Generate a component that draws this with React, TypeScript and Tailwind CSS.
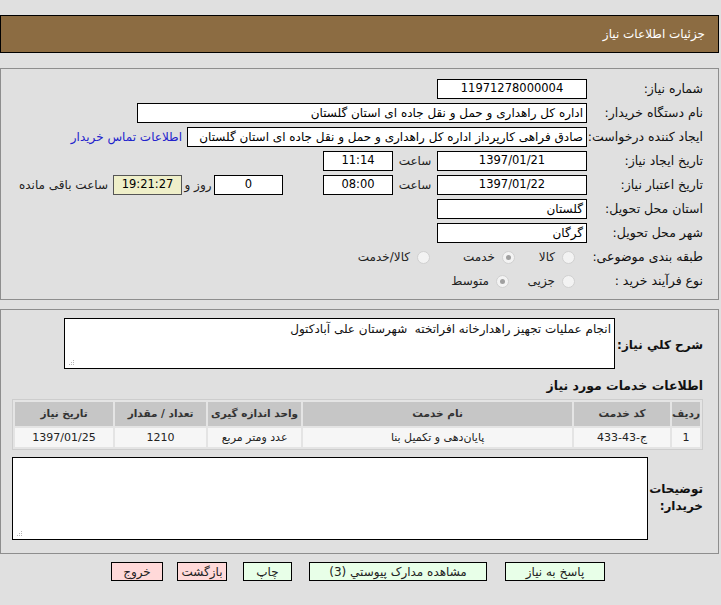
const font = { fontFamily: '"DejaVu Sans", Tahoma, sans-serif' };

function Field({
  w,
  children,
  center,
  bg = "bg-white",
  border = "border-black",
  num,
}: {
  w: string;
  children?: React.ReactNode;
  center?: boolean;
  bg?: string;
  border?: string;
  num?: boolean;
}) {
  return (
    <div
      className={`flex h-5 shrink-0 items-center overflow-hidden whitespace-nowrap border px-[3px] text-black ${bg} ${border} ${w} ${
        num ? "text-[11.5px]" : "text-[12px]"
      } ${center ? "justify-center" : "justify-start"}`}
    >
      {children}
    </div>
  );
}

function Label({ children, wide }: { children: React.ReactNode; wide?: boolean }) {
  return (
    <div
      className={`shrink-0 whitespace-nowrap text-[12.5px] text-[#111] ${
        wide ? "-ml-[4px] w-[120px]" : "w-[116px]"
      }`}
    >
      {children}
    </div>
  );
}

function Radio({ checked }: { checked?: boolean }) {
  return (
    <span className="flex h-[13px] w-[13px] shrink-0 items-center justify-center rounded-full border border-[#d0d0d0] bg-[#f3f3f3]">
      {checked && <span className="h-[5px] w-[5px] rounded-full bg-[#a0a0a0]" />}
    </span>
  );
}

function Option({ label, checked, w }: { label: string; checked?: boolean; w: string }) {
  return (
    <div className={`flex items-center gap-[7px] ${w}`}>
      <Radio checked={checked} />
      <span className="text-[12px] text-[#222]">{label}</span>
    </div>
  );
}

function Grip() {
  return (
    <svg className="absolute bottom-[2px] left-[3px]" width="7" height="7" viewBox="0 0 7 7">
      <rect x="5" y="1" width="1" height="1" fill="#b5b5b5" />
      <rect x="3" y="3" width="1" height="1" fill="#b5b5b5" />
      <rect x="5" y="3" width="1" height="1" fill="#b5b5b5" />
      <rect x="1" y="5" width="1" height="1" fill="#b5b5b5" />
      <rect x="3" y="5" width="1" height="1" fill="#b5b5b5" />
      <rect x="5" y="5" width="1" height="1" fill="#b5b5b5" />
    </svg>
  );
}

function Btn({ children, red, w }: { children: React.ReactNode; red?: boolean; w: string }) {
  return (
    <div
      className={`flex h-[19px] items-center justify-center border border-black text-[12px] text-[#222] ${w} ${
        red ? "bg-[#ffd9d9]" : "bg-[#e8ffe8]"
      }`}
    >
      {children}
    </div>
  );
}

export default function App() {
  const th = "bg-[#c6c6c6] h-[24px] text-[10.5px] font-bold text-[#333] text-center whitespace-nowrap";
  const td = "bg-[#f6f6f6] h-[19px] text-[11px] leading-[19px] text-[#222] text-center whitespace-nowrap";
  return (
    <div style={font} className="min-h-screen w-full bg-[#e0e0e0] pt-[15px]">
      <div dir="rtl" className="w-[719px]">
        <div className="flex h-[38px] w-[719px] items-center border border-black bg-[#8c6c42] pr-[13px] text-[12px] text-white">
          جزئیات اطلاعات نیاز
        </div>

        <div className="mt-[15px] flex h-[232px] w-[719px] flex-col gap-1 border border-[#8e8e8e] pr-[15px] pt-[10px]">
          <div className="flex items-center">
            <Label>شماره نیاز:</Label>
            <Field w="w-[150px]" center num>11971278000004</Field>
          </div>
          <div className="flex items-center">
            <Label>نام دستگاه خریدار:</Label>
            <Field w="w-[450px]">اداره کل راهداری و حمل و نقل جاده ای استان گلستان</Field>
          </div>
          <div className="flex items-center">
            <Label wide>ایجاد کننده درخواست:</Label>
            <Field w="w-[400px]">صادق فراهی کارپرداز اداره کل راهداری و حمل و نقل جاده ای استان گلستان</Field>
            <span className="mr-[5px] whitespace-nowrap text-[12px] text-[#2222cc]">اطلاعات تماس خریدار</span>
          </div>
          <div className="flex items-center">
            <Label>تاریخ ایجاد نیاز:</Label>
            <Field w="w-[150px]" center num>1397/01/21</Field>
            <span className="w-[44px] text-center text-[12px] text-[#222]">ساعت</span>
            <Field w="w-[70px]" center num>11:14</Field>
          </div>
          <div className="flex items-center">
            <Label>تاریخ اعتبار نیاز:</Label>
            <Field w="w-[150px]" center num>1397/01/22</Field>
            <span className="w-[44px] text-center text-[12px] text-[#222]">ساعت</span>
            <Field w="w-[70px]" center num>08:00</Field>
            <div className="w-[40px]" />
            <Field w="w-[69px]" center num>0</Field>
            <span className="w-[32px] text-center text-[12px] text-[#222]">روز و</span>
            <Field w="w-[69px]" center num bg="bg-[#efefc9]" border="border-[#555]">19:21:27</Field>
            <span className="mr-[5px] whitespace-nowrap text-[12px] text-[#222]">ساعت باقی مانده</span>
          </div>
          <div className="flex items-center">
            <Label>استان محل تحویل:</Label>
            <Field w="w-[150px]">گلستان</Field>
          </div>
          <div className="flex items-center">
            <Label>شهر محل تحویل:</Label>
            <Field w="w-[150px]">گرگان</Field>
          </div>
          <div className="flex h-5 items-center">
            <Label>طبقه بندی موضوعی:</Label>
            <div className="mr-[12px] flex items-center">
              <Option label="کالا" w="w-[60px]" />
              <Option label="خدمت" checked w="w-[85px]" />
              <Option label="کالا/خدمت" w="w-[100px]" />
            </div>
          </div>
          <div className="flex h-5 items-center">
            <Label>نوع فرآیند خرید :</Label>
            <div className="mr-[12px] flex items-center">
              <Option label="جزیی" w="w-[66px]" />
              <Option label="متوسط" checked w="w-[100px]" />
            </div>
          </div>
        </div>

        <div className="mt-[9px] flex h-[245px] w-[719px] flex-col border border-[#8e8e8e] pr-[15px] pt-[8px]">
          <div className="flex items-center">
            <div className="w-[88px] shrink-0 whitespace-nowrap pt-[2px] text-[12px] font-bold text-[#111]">شرح کلي نياز:</div>
            <div className="relative h-[51px] w-[551px] border border-black bg-white px-[3px] pt-[1px] text-[12px] text-[#111]">
              انجام عملیات تجهیز راهدارخانه افراتخته&nbsp; شهرستان علی آبادکتول
              <Grip />
            </div>
          </div>
          <div className="mt-[8px] text-[12.5px] font-bold text-[#111]">اطلاعات خدمات مورد نياز</div>
          <table className="mt-[3px] w-[691px] border-separate border-spacing-[2px] border border-[#cdcdcd] bg-[#e4e4e4]">
            <thead>
              <tr>
                <th className={`${th} w-[26px]`}>ردیف</th>
                <th className={`${th} w-[96px]`}>کد خدمت</th>
                <th className={`${th} w-[269px]`}>نام خدمت</th>
                <th className={`${th} w-[93px]`}>واحد اندازه گیری</th>
                <th className={`${th} w-[91px]`}>تعداد / مقدار</th>
                <th className={`${th}`}>تاریخ نیاز</th>
              </tr>
            </thead>
            <tbody>
              <tr>
                <td className={td}>1</td>
                <td className={td}>ج-43-433</td>
                <td className={td}>پایان‌دهی و تکمیل بنا</td>
                <td className={td}>عدد ومتر مربع</td>
                <td className={td}>1210</td>
                <td className={td}>1397/01/25</td>
              </tr>
            </tbody>
          </table>
          <div className="mt-[7px] flex items-center">
            <div className="w-[55px] shrink-0 whitespace-nowrap text-[12px] font-bold leading-[17px] text-[#111]">
              توضیحات
              <br />
              خریدار:
            </div>
            <div className="relative h-[83px] w-[636px] border border-black bg-white">
              <Grip />
            </div>
          </div>
        </div>

        <div className="mt-[8px] flex w-[719px] items-center pr-[114px]">
          <Btn w="w-[100px]">پاسخ به نیاز</Btn>
          <div className="w-[18px]" />
          <Btn w="w-[178px]">مشاهده مدارک پیوستي (3)</Btn>
          <div className="w-[17px]" />
          <Btn w="w-[49px]">چاپ</Btn>
          <div className="w-[16px]" />
          <Btn w="w-[50px]" red>بازگشت</Btn>
          <div className="w-[14px]" />
          <Btn w="w-[52px]" red>خروج</Btn>
        </div>
      </div>
    </div>
  );
}
